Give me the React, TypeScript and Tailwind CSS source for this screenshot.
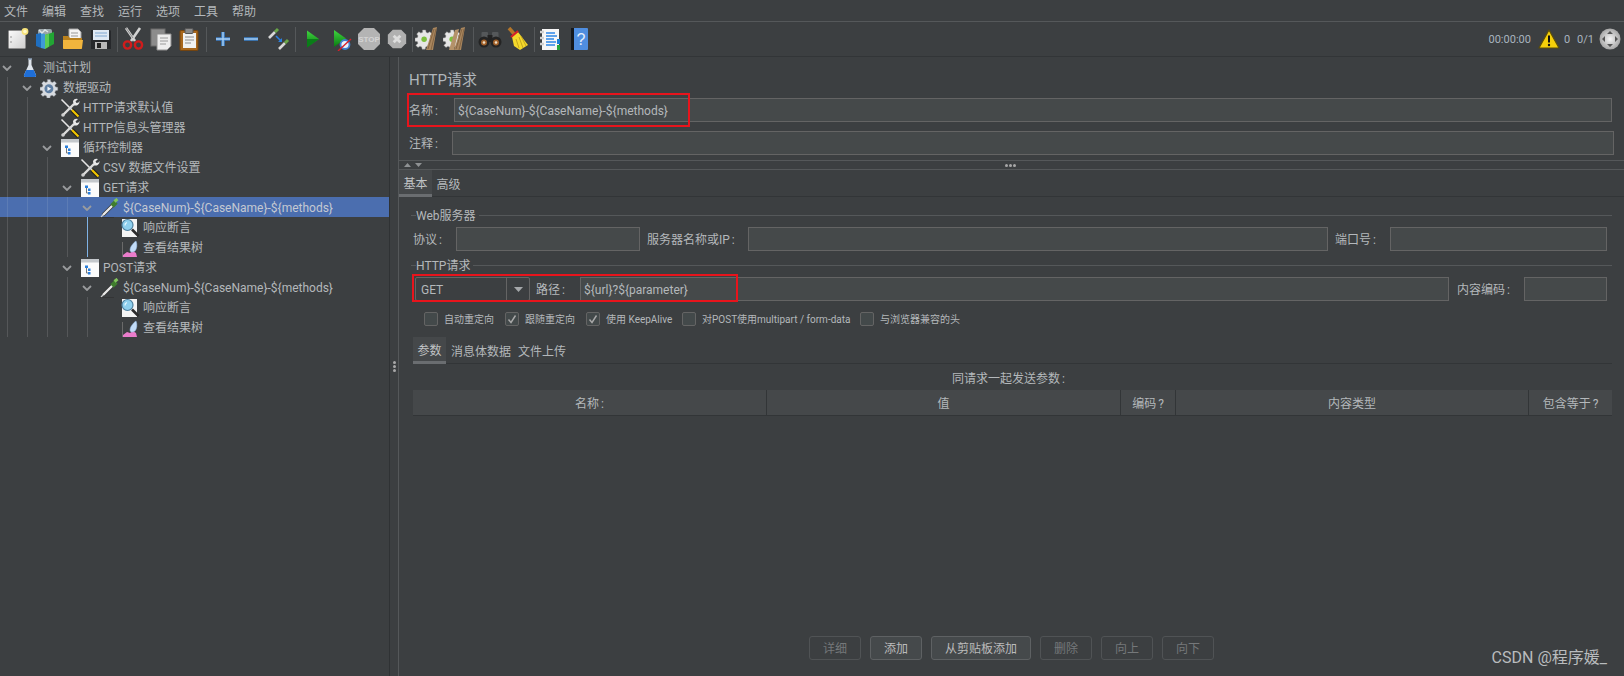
import React from 'react';

const Tool = ({ children, size = 24 }: { children: React.ReactNode; size?: number }) => (
  <svg width={size} height={size} viewBox="0 0 24 24" className="block shrink-0">{children}</svg>
);

const NewIcon = () => (
  <Tool>
    <defs><linearGradient id="pg" x1="0" y1="0" x2="1" y2="1"><stop offset="0" stopColor="#fbfbfb" /><stop offset="1" stopColor="#cfcfcf" /></linearGradient></defs>
    <rect x="3.5" y="3.5" width="17" height="18" rx="1" fill="url(#pg)" stroke="#8d8d8d" />
    <circle cx="6" cy="10" r=".8" fill="#888" /><circle cx="6" cy="15" r=".8" fill="#888" />
    <circle cx="20" cy="4.5" r="3.4" fill="#f6e27a" /><circle cx="20" cy="4.5" r="1.8" fill="#fff8c8" />
  </Tool>
);
const TemplatesIcon = () => (
  <Tool>
    <rect x="5" y="2" width="14" height="7" rx="2" fill="#9aa4a8" />
    <path d="M3 7l5-1v15l-5-2z" fill="#1f6fc0" />
    <path d="M8 6l4 1v15l-4-1z" fill="#3f9ad8" />
    <path d="M12 8l9-3v12l-9 5z" fill="#22a534" />
    <path d="M12 8l4-1.4v13L12 22z" fill="#5ccc55" />
    <path d="M6 3l3 3 3-3 3 2" stroke="#dfe5e8" strokeWidth="1.4" fill="none" />
  </Tool>
);
const OpenIcon = () => (
  <Tool>
    <path d="M8 2h9l3 3v9H8z" fill="#f4f4f4" stroke="#a5a5a5" />
    <path d="M10 6h7M10 9h7" stroke="#999" />
    <path d="M2 9h5l2 2h12v10a1 1 0 0 1-1 1H3a1 1 0 0 1-1-1z" fill="#b9801c" />
    <path d="M2 13h20l-1 8a1 1 0 0 1-1 1H3a1 1 0 0 1-1-1z" fill="#f1b53d" />
  </Tool>
);
const SaveIcon = () => (
  <Tool>
    <path d="M2 3h19l1 1v18H2z" fill="#26282b" />
    <rect x="4" y="3" width="16" height="10" fill="#dfe9f4" />
    <path d="M6 6h12M6 9h12" stroke="#7ea6d0" />
    <rect x="6" y="15" width="12" height="7" fill="#b9b9b9" />
    <rect x="8" y="16" width="4" height="5" fill="#222" />
  </Tool>
);
const CutIcon = () => (
  <Tool>
    <path d="M5 1l9 13M19 1L10 14" stroke="#d2d2d2" strokeWidth="2.6" />
    <path d="M5 1l7 10" stroke="#8a8a8a" strokeWidth="1" />
    <circle cx="6.5" cy="18" r="3.6" fill="none" stroke="#d01c1c" strokeWidth="2.4" />
    <circle cx="17.5" cy="18" r="3.6" fill="none" stroke="#d01c1c" strokeWidth="2.4" />
  </Tool>
);
const CopyIcon = () => (
  <Tool>
    <rect x="2" y="2" width="14" height="17" fill="#8c8c8c" stroke="#6d6d6d" />
    <path d="M8 7h14v12l-4 4H8z" fill="#ededed" stroke="#8f8f8f" />
    <path d="M11 11h8M11 14h8M11 17h6" stroke="#9a9a9a" />
  </Tool>
);
const PasteIcon = () => (
  <Tool>
    <rect x="3" y="3.5" width="18" height="20" rx="1" fill="#a8671c" stroke="#734410" />
    <rect x="6" y="6" width="13" height="15" fill="#f1f1f1" />
    <rect x="8" y="1.5" width="8" height="5" rx="1" fill="#8a8a8a" stroke="#555" />
    <path d="M8 10h9M8 13h9M8 16h6" stroke="#8d8d8d" />
  </Tool>
);
const PlusIcon = () => (
  <Tool>
    <path d="M12 5v14M5 12h14" stroke="#3c7fc7" strokeWidth="3.6" />
    <path d="M12 5v14M5 12h14" stroke="#a9d0f3" strokeWidth="1.4" />
  </Tool>
);
const MinusIcon = () => (
  <Tool>
    <path d="M5 12h14" stroke="#3c7fc7" strokeWidth="3.6" />
    <path d="M5 12h14" stroke="#a9d0f3" strokeWidth="1.4" />
  </Tool>
);
const ToggleIcon = () => (
  <Tool>
    <path d="M2 11l6-6" stroke="#d8d8d8" strokeWidth="2.6" />
    <path d="M8 5l3-3" stroke="#69a648" strokeWidth="3" />
    <path d="M12 22l6-6" stroke="#d8d8d8" strokeWidth="2.6" />
    <path d="M18 16l3-3" stroke="#69a648" strokeWidth="3" />
    <path d="M9 9l5 5" stroke="#2a7fe0" strokeWidth="1.6" />
    <path d="M15 11v4h-4z" fill="#2a7fe0" />
  </Tool>
);
const StartIcon = () => (
  <Tool>
    <defs><linearGradient id="s1" x1="0" y1="0" x2="0" y2="1"><stop offset="0" stopColor="#3fd63f" /><stop offset="1" stopColor="#0a7a12" /></linearGradient></defs>
    <path d="M6 3.500l12 8.500-12 8.500z" fill="url(#s1)" />
    <path d="M6 12h12l-12 8.500z" fill="#0a7d18" />
  </Tool>
);
const StartNoIcon = () => (
  <Tool>
    <defs><linearGradient id="s2" x1="0" y1="0" x2="0" y2="1"><stop offset="0" stopColor="#3fd63f" /><stop offset="1" stopColor="#0a7a12" /></linearGradient></defs>
    <path d="M5 3l12 8.500L5 20z" fill="url(#s2)" />
    <circle cx="16" cy="17.500" r="4.500" fill="#e8f1fb" stroke="#3f7fd0" strokeWidth="1.800" />
    <path d="M9 24l13-12" stroke="#d5202a" strokeWidth="1.400" />
  </Tool>
);
const StopIcon = () => (
  <svg width="24" height="24" viewBox="0 0 24 24" className="block shrink-0">
    <path d="M7 1h10l6 6v10l-6 6H7l-6-6V7z" fill="#b4b4b4" />
    <text x="12" y="15" textAnchor="middle" fontSize="8" fontWeight="700" fontFamily="Liberation Sans" fill="#d4d4d4">STOP</text>
  </svg>
);
const ShutdownIcon = () => (
  <Tool size={20}>
    <path d="M7 1h10l6 6v10l-6 6H7l-6-6V7z" fill="#b0b0b0" />
    <path d="M8 8l8 8M16 8l-8 8" stroke="#dddddd" strokeWidth="3.4" />
  </Tool>
);
const GearPath = "M10 2h4l.6 3 2.3 1 2.6-1.7 2.8 2.8L20 9.7l1 2.3 3 .6v4l-3 .6-1 2.3 1.7 2.6-2.8 2.8-2.6-1.7-2.3 1-.6 3h-4l-.6-3-2.3-1-2.6 1.7-2.8-2.8L4 19.5l-1-2.3-3-.6v-4l3-.6 1-2.3L2.300 7.100l2.800-2.800L7.700 6 10 5z";
const BroomBits = () => (
  <>
    <path d="M18 1l4-1-4 23h-7z" fill="#a9865e" />
    <path d="M13 22l6-20M16 23l5-21" stroke="#7b5d3c" strokeWidth=".8" />
  </>
);
const ClearIcon = () => (
  <Tool>
    <g transform="scale(.76) translate(0 2)"><path d={GearPath} fill="#e6e6e6" stroke="#9a9a9a" strokeWidth=".6" /><circle cx="12" cy="14" r="3.6" fill="#7cbf3e" /></g>
    <BroomBits />
  </Tool>
);
const ClearAllIcon = () => (
  <Tool>
    <g transform="scale(.76) translate(0 2)"><path d={GearPath} fill="#e6e6e6" stroke="#9a9a9a" strokeWidth=".6" /><circle cx="12" cy="14" r="3.6" fill="#7cbf3e" /></g>
    <path d="M12 3l4-1-5 21H6z" fill="#b4926a" />
    <BroomBits />
  </Tool>
);
const BinocIcon = () => (
  <Tool>
    <rect x="3.500" y="5" width="6.500" height="7" rx="1" fill="#55585a" />
    <rect x="14" y="5" width="6.500" height="7" rx="1" fill="#55585a" />
    <rect x="9.500" y="8" width="5" height="7" fill="#222" />
    <circle cx="6" cy="15" r="5.500" fill="#242424" />
    <circle cx="18" cy="15" r="5.500" fill="#242424" />
    <circle cx="6" cy="15.500" r="3" fill="#a2612a" />
    <circle cx="18" cy="15.500" r="3" fill="#a2612a" />
    <circle cx="6" cy="15.500" r="1.300" fill="#f0e0c8" />
    <circle cx="18" cy="15.500" r="1.300" fill="#f0e0c8" />
  </Tool>
);
const BroomIcon = () => (
  <Tool>
    <path d="M3 1l6 7" stroke="#b4762a" strokeWidth="3.600" />
    <path d="M6 10l6-5 10 13-8 5-6-4z" fill="#f4d92b" />
    <path d="M13 21l-3-9M17 21l-4-11M20 19l-5-10" stroke="#b9981a" strokeWidth=".8" />
    <path d="M5 10l7-6" stroke="#d51f28" strokeWidth="2.200" />
  </Tool>
);
const LogIcon = () => (
  <Tool>
    <rect x="4" y="2" width="17" height="21" fill="#f6f6f6" />
    <path d="M8 6h9M8 9h11M8 12h8M8 15h10M8 18h9" stroke="#2d86e8" strokeWidth="1.300" />
    <path d="M2 5h4M2 11h4M2 17h4" stroke="#d0d0d0" strokeWidth="2.400" />
    <rect x="19" y="12" width="3" height="5" fill="#1c7ed6" />
    <rect x="19" y="18" width="3" height="5" fill="#25a33a" />
  </Tool>
);
const HelpIcon = () => (
  <svg width="24" height="24" viewBox="0 0 24 24" className="block shrink-0">
    <rect x="3" y="1" width="17" height="22" rx="1" fill="#4f8ee0" />
    <rect x="3" y="1" width="3" height="22" fill="#15181c" />
    <text x="13" y="18" textAnchor="middle" fontSize="16" fontFamily="Liberation Sans" fill="#e6f0fb">?</text>
  </svg>
);
const WarnIcon = () => (
  <svg width="22" height="21" viewBox="0 0 22 21" className="block shrink-0">
    <path d="M11 1l10 18H1z" fill="#f5cf0a" stroke="#5d4f08" strokeWidth="1.200" strokeLinejoin="round" />
    <path d="M11 6.500v7" stroke="#111" strokeWidth="2" />
    <circle cx="11" cy="16" r="1.200" fill="#111" />
  </svg>
);
const ExpandIcon = () => (
  <svg width="22" height="22" viewBox="0 0 22 22" className="block shrink-0">
    <defs><radialGradient id="ex"><stop offset="0" stopColor="#f5f5f5" /><stop offset="1" stopColor="#a7a7a7" /></radialGradient></defs>
    <circle cx="11" cy="11" r="10.500" fill="url(#ex)" />
    <path d="M11 3l3 3H8zM11 19l3-3H8zM3 11l3-3v6zM19 11l-3-3v6z" fill="#555" />
  </svg>
);

const Flask = () => (
  <svg width="20" height="20" viewBox="0 0 20 20" className="block shrink-0">
    <path d="M8.500 1h3v6l4.500 10a1.500 1.500 0 0 1-1.500 2h-9A1.500 1.500 0 0 1 4 17l4.500-10z" fill="#dfe5ec" />
    <path d="M6.300 12h7.400l2.300 5a1.500 1.500 0 0 1-1.500 2h-9A1.500 1.500 0 0 1 4 17z" fill="#1f6fd8" />
    <path d="M8 1h4" stroke="#8ea2ba" strokeWidth="1.500" />
  </svg>
);
const Gear = () => (
  <svg width="20" height="20" viewBox="0 0 27 27" className="block shrink-0">
    <path d={GearPath} fill="#d7dbe0" stroke="#8b9096" strokeWidth=".6" />
    <circle cx="12" cy="14.500" r="6" fill="#5f7fa3" />
    <path d="M10 11.500l5 3-5 3z" fill="#f0f4f8" />
  </svg>
);
const Wrench = () => (
  <svg width="20" height="20" viewBox="0 0 20 20" className="block shrink-0">
    <path d="M1.500 1.500l11 11" stroke="#e4e4e4" strokeWidth="1.600" />
    <path d="M12 12l6.500 6.500" stroke="#1c1c1c" strokeWidth="4" />
    <path d="M12 12l6.500 6.500" stroke="#f0c400" strokeWidth="2.200" />
    <path d="M3 17L14 6" stroke="#dcdcdc" strokeWidth="2.400" />
    <path d="M13 3a4 4 0 0 1 5-2l-2.500 2.500 1 1.500 2-.5 1-1.500a4 4 0 0 1-6 4z" fill="#e8e8e8" />
    <circle cx="3" cy="17" r="1.800" fill="#cfcfcf" />
  </svg>
);
const Loop = () => (
  <svg width="20" height="20" viewBox="0 0 20 20" className="block shrink-0">
    <rect x="1" y="1" width="18" height="18" fill="#fbfbfb" />
    <rect x="1" y="1" width="18" height="3.500" fill="#c4c8cc" />
    <path d="M6.500 8v7h3" stroke="#777" fill="none" />
    <rect x="5" y="7.500" width="3" height="2.500" fill="#2a7fdc" />
    <rect x="8" y="10.500" width="2.500" height="2.500" fill="#2a7fdc" />
    <rect x="8" y="14" width="2.500" height="2.500" fill="#2a7fdc" />
  </svg>
);
const Pipette = () => (
  <svg width="20" height="20" viewBox="0 0 20 20" className="block shrink-0">
    <path d="M3 17L13 7" stroke="#303030" strokeWidth="3.800" />
    <path d="M3 17L13 7" stroke="#e8e8e8" strokeWidth="2.400" />
    <path d="M1 19l2-2" stroke="#cfcfcf" strokeWidth="1.200" />
    <path d="M12 8l4-4" stroke="#3f7d2e" strokeWidth="4.600" />
    <path d="M14.500 3.500l3-2.500" stroke="#82c45c" strokeWidth="3" />
    <path d="M0 20h14" stroke="#2b2b2b" strokeWidth="1" />
  </svg>
);
const Assert = () => (
  <svg width="20" height="20" viewBox="0 0 20 20" className="block shrink-0">
    <rect x="2" y="1" width="15" height="18" fill="#f4f4f4" />
    <circle cx="7.500" cy="7" r="5.500" fill="#8fd0ee" stroke="#4d7f9e" strokeWidth="1.200" />
    <path d="M7 4.500a3 3 0 0 0-2 3" stroke="#e3f6ff" strokeWidth="1.300" fill="none" />
    <path d="M12 11.500l6.500 6.500" stroke="#2b2b2b" strokeWidth="2.600" />
  </svg>
);
const ResultTree = () => (
  <svg width="20" height="20" viewBox="0 0 20 20" className="block shrink-0">
    <path d="M2.500 4v15" stroke="#6a6a6a" strokeWidth="1" />
    <path d="M3 19v-2l4-3 3 1 3-2 3 2 1 4z" fill="#ea7ccb" />
    <path d="M10 12c0-3 3-7 6-9 1.500 3 1 8-1 10-2 1.500-5 1.500-5-1z" fill="#c2dcf8" stroke="#8fb2dc" strokeWidth=".5" />
  </svg>
);

const Sep = ({ className = '' }: { className?: string }) => <div className={`w-px h-[25px] bg-[#55585a] shrink-0 ${className}`} />;
const Cell = ({ children, className = '' }: { children: React.ReactNode; className?: string }) => (
  <div className={`w-[28px] h-full flex items-center justify-center shrink-0 ${className}`}>{children}</div>
);
const Colon = ({ ch = ':' }: { ch?: string }) => <span className="ml-[2px]">{ch}</span>;

const menu = ['文件', '编辑', '查找', '运行', '选项', '工具', '帮助'];

type Row = { d: number; toggle?: boolean; icon: React.ReactNode; label: string; sel?: boolean; blue?: boolean };
const rows: Row[] = [
  { d: 0, toggle: true, icon: <Flask />, label: '测试计划' },
  { d: 1, toggle: true, icon: <Gear />, label: '数据驱动' },
  { d: 2, icon: <Wrench />, label: 'HTTP请求默认值' },
  { d: 2, icon: <Wrench />, label: 'HTTP信息头管理器' },
  { d: 2, toggle: true, icon: <Loop />, label: '循环控制器' },
  { d: 3, icon: <Wrench />, label: 'CSV 数据文件设置' },
  { d: 3, toggle: true, icon: <Loop />, label: 'GET请求' },
  { d: 4, toggle: true, icon: <Pipette />, label: '${CaseNum}-${CaseName}-${methods}', sel: true },
  { d: 5, icon: <Assert />, label: '响应断言', blue: true },
  { d: 5, icon: <ResultTree />, label: '查看结果树', blue: true },
  { d: 3, toggle: true, icon: <Loop />, label: 'POST请求' },
  { d: 4, toggle: true, icon: <Pipette />, label: '${CaseNum}-${CaseName}-${methods}' },
  { d: 5, icon: <Assert />, label: '响应断言' },
  { d: 5, icon: <ResultTree />, label: '查看结果树' },
];

const TreeRow = ({ row }: { row: Row }) => (
  <div className={`flex h-[20px] items-center ${row.sel ? 'bg-[#4b6eaf] text-[#c4c9d2]' : ''}`}>
    {Array.from({ length: row.d }).map((_, i) => (
      <div key={i} className="w-[20px] h-full pl-[7px] shrink-0">
        <div className={`w-px h-full ${row.blue && i === 4 ? 'bg-[#7fb2e5]' : row.sel ? 'bg-[#5c7cb5]' : 'bg-[#555759]'}`} />
      </div>
    ))}
    <div className="w-[20px] h-full shrink-0 pl-[2px] pt-[2px] flex items-center">
      {row.toggle && (
        <svg width="10" height="6" viewBox="0 0 10 6" className="block">
          <path d="M1 1l4 4 4-4" stroke="#9a9c9e" strokeWidth="1.800" fill="none" />
        </svg>
      )}
    </div>
    <div className="w-[23px] shrink-0 h-full pt-px">{row.icon}</div>
    <span className="whitespace-nowrap pt-[2px]">{row.label}</span>
  </div>
);

const Input = ({ className = '', value = '' }: { className?: string; value?: string }) => (
  <div className={`h-[24px] border border-[#646464] bg-[#45494a] px-[3px] pt-[2px] flex items-center whitespace-nowrap overflow-hidden ${className}`}>{value}</div>
);

const Section = ({ title }: { title: string }) => (
  <div className="flex items-center h-[12px] ml-[12px] mr-[12px]">
    <div className="w-[5px] h-px bg-[#55585a] -translate-y-px" />
    <span className="whitespace-nowrap leading-[12px]">{title}</span>
    <div className="flex-1 h-px bg-[#55585a] ml-[3px] -translate-y-px" />
  </div>
);

const Check = ({ checked }: { checked?: boolean }) => (
  <div className="w-[14px] h-[14px] rounded-[2px] border border-[#646464] bg-[#43494a] flex items-center justify-center shrink-0">
    {checked && (
      <svg width="10" height="10" viewBox="0 0 10 10"><path d="M1.500 5.500L4 8.500l4.500-7" stroke="#a9a9a9" strokeWidth="1.400" fill="none" /></svg>
    )}
  </div>
);

const checks: { label: string; on?: boolean; w: string }[] = [
  { label: '自动重定向', w: 'w-[81px]' },
  { label: '跟随重定向', on: true, w: 'w-[81px]' },
  { label: '使用 KeepAlive', on: true, w: 'w-[96px]' },
  { label: '对POST使用multipart / form-data', w: 'w-[178px]' },
  { label: '与浏览器兼容的头', w: 'w-[120px]' },
];

const cols: { label: string; ch?: string; w: string }[] = [
  { label: '名称', ch: ':', w: 'w-[354px]' },
  { label: '值', w: 'w-[354px]' },
  { label: '编码', ch: '?', w: 'w-[55px]' },
  { label: '内容类型', w: 'w-[353px]' },
  { label: '包含等于', ch: '?', w: 'flex-1' },
];

const buttons: { label: string; on?: boolean; w: string }[] = [
  { label: '详细', w: 'w-[52px]' },
  { label: '添加', on: true, w: 'w-[52px]' },
  { label: '从剪贴板添加', on: true, w: 'w-[100px]' },
  { label: '删除', w: 'w-[52px]' },
  { label: '向上', w: 'w-[52px]' },
  { label: '向下', w: 'w-[52px]' },
];

const Tab = ({ label }: { label: string }) => (
  <div className="w-[33px] h-[27px] pt-[3px] bg-[#45484a] border-b-[3px] border-[#6a6d70] flex items-center justify-center text-[#c0c3c5]">{label}</div>
);

export default function App() {
  return (
    <div className="relative w-[1624px] h-[676px] overflow-hidden bg-[#3c3f41] text-[#b4b8bb] text-[12px] leading-none flex flex-col font-['Roboto','Noto_Sans_CJK_SC',sans-serif]">
      {/* menu */}
      <div className="h-[22px] shrink-0 border-b border-[#55585a] flex items-center pl-[4px] pt-[2px] gap-[15px]">
        {menu.map((m) => <span key={m} className="w-[23px] whitespace-nowrap">{m}</span>)}
      </div>

      {/* toolbar */}
      <div className="h-[35px] shrink-0 border-b border-[#323537] flex items-center pl-[3px]">
        <Cell><NewIcon /></Cell>
        <Cell><TemplatesIcon /></Cell>
        <Cell><OpenIcon /></Cell>
        <Cell><SaveIcon /></Cell>
        <Sep className="ml-[2px] mr-px" />
        <Cell><CutIcon /></Cell>
        <Cell><CopyIcon /></Cell>
        <Cell><PasteIcon /></Cell>
        <Sep className="ml-[3px] mr-[2px]" />
        <Cell><PlusIcon /></Cell>
        <Cell><MinusIcon /></Cell>
        <Cell><ToggleIcon /></Cell>
        <Sep className="ml-[2px] mr-[3px]" />
        <Cell><StartIcon /></Cell>
        <Cell><StartNoIcon /></Cell>
        <Cell><StopIcon /></Cell>
        <Cell><ShutdownIcon /></Cell>
        <Sep className="ml-px" />
        <Cell><ClearIcon /></Cell>
        <Cell><ClearAllIcon /></Cell>
        <Sep className="ml-[4px] mr-[2px]" />
        <Cell><BinocIcon /></Cell>
        <Cell><BroomIcon /></Cell>
        <Sep className="ml-[2px] mr-px" />
        <Cell><LogIcon /></Cell>
        <Cell className="ml-[2px]"><HelpIcon /></Cell>
        <div className="ml-auto flex items-center pr-[3px] text-[#a9b4bf] text-[11px]">
          <span className="mr-[7px]">00:00:00</span>
          <WarnIcon />
          <span className="ml-[4px] mr-[7px]">0</span>
          <span className="mr-[5px]">0/1</span>
          <ExpandIcon />
        </div>
      </div>

      <div className="flex-1 flex min-h-0">
        {/* tree */}
        <div className="w-[390px] shrink-0 border-r border-[#2f3234]">
          {rows.map((r, i) => <TreeRow key={i} row={r} />)}
        </div>
        {/* vertical splitter */}
        <div className="w-[9px] shrink-0 border-r border-[#55585a] flex flex-col items-center justify-center gap-[1px]">
          {[0, 1, 2].map((i) => <div key={i} className="w-[3px] h-[3px] rounded-full bg-[#a8a8a8]" />)}
        </div>

        {/* right */}
        <div className="flex-1 min-w-0 flex flex-col">
          <div className="h-[41px] pl-[10px] pt-[5px] flex items-center text-[15px] text-[#b0b6bb]">HTTP请求</div>
          <div className="flex items-center pl-[10px] pr-[12px]">
            <span className="w-[45px] shrink-0 pt-[2px]">名称<Colon /></span>
            <Input className="flex-1" value="${CaseNum}-${CaseName}-${methods}" />
          </div>
          <div className="flex items-center pl-[10px] pr-[10px] mt-[9px]">
            <span className="w-[43px] shrink-0 pt-[2px]">注释<Colon /></span>
            <Input className="flex-1" />
          </div>

          {/* horizontal splitter */}
          <div className="mt-[5px] h-[10px] border-y border-[#55585a] flex items-center relative shrink-0">
            <div className="flex items-center gap-[4px] pl-[5px]">
              <svg width="7" height="4" viewBox="0 0 7 4"><path d="M3.500 0L7 4H0z" fill="#8f9294" /></svg>
              <svg width="7" height="4" viewBox="0 0 7 4"><path d="M3.500 4L7 0H0z" fill="#8f9294" /></svg>
            </div>
            <div className="absolute left-[606px] flex gap-[1px]">
              {[0, 1, 2].map((i) => <div key={i} className="w-[3px] h-[3px] rounded-full bg-[#a8a8a8]" />)}
            </div>
          </div>

          {/* tabs */}
          <div className="h-[27px] shrink-0 border-b border-[#323537] flex">
            <Tab label="基本" />
            <div className="w-[33px] flex items-center justify-center pt-[3px]">高级</div>
          </div>

          <div className="pt-[13px]">
            <Section title="Web服务器" />
            <div className="flex items-center mt-[5px] pl-[14px] pr-[17px]">
              <span className="w-[43px] shrink-0 pt-[2px]">协议<Colon /></span>
              <Input className="w-[184px] shrink-0" />
              <span className="w-[108px] pl-[7px] pt-[2px] shrink-0 whitespace-nowrap">服务器名称或IP<Colon /></span>
              <Input className="flex-1" />
              <span className="w-[62px] pl-[7px] pt-[2px] shrink-0 whitespace-nowrap">端口号<Colon /></span>
              <Input className="w-[217px] shrink-0" />
            </div>

            <div className="mt-[9px]"><Section title="HTTP请求" /></div>
            <div className="flex items-center mt-[5px] pl-[16px] pr-[17px]">
              <div className="w-[115px] h-[24px] shrink-0 border border-[#646464] rounded-[2px] flex items-center">
                <span className="flex-1 pl-[5px] pt-[2px]">GET</span>
                <div className="w-[23px] h-full border-l border-[#646464] flex items-center justify-center">
                  <svg width="9" height="5" viewBox="0 0 9 5"><path d="M0 0h9L4.500 5z" fill="#a5a8aa" /></svg>
                </div>
              </div>
              <span className="w-[50px] pl-[6px] pt-[2px] shrink-0">路径<Colon /></span>
              <Input className="flex-1" value="${url}?${parameter}" />
              <span className="w-[75px] pl-[8px] pt-[2px] shrink-0 whitespace-nowrap">内容编码<Colon /></span>
              <Input className="w-[83px] shrink-0" />
            </div>

            <div className="flex items-center mt-[11px] pl-[25px] text-[10px] h-[14px]">
              {checks.map((c) => (
                <div key={c.label} className={`${c.w} shrink-0 flex items-center gap-[6px] whitespace-nowrap`}>
                  <Check checked={c.on} />
                  <span className="pt-[2px]">{c.label}</span>
                </div>
              ))}
            </div>

            <div className="mt-[11px] ml-[14px] mr-[12px] h-[27px] border-b border-[#323537] flex">
              <Tab label="参数" />
              <div className="w-[70px] flex items-center justify-center pt-[3px]">消息体数据</div>
              <div className="w-[50px] flex items-center justify-center ml-[1px] pt-[3px]">文件上传</div>
            </div>

            <div className="h-[26px] flex items-center justify-center ml-[14px] mr-[12px] pr-[8px] pt-[3px]">同请求一起发送参数<Colon /></div>

            <div className="ml-[14px] mr-[12px] h-[26px] bg-[#45484a] border-b border-[#323537] flex">
              {cols.map((c, i) => (
                <div key={c.label} className={`${c.w} ${i < 4 ? 'shrink-0 border-r border-[#323537]' : ''} pt-[3px] flex items-center justify-center`}>
                  <span>{c.label}{c.ch && <Colon ch={c.ch} />}</span>
                </div>
              ))}
            </div>
          </div>

          <div className="mt-auto pb-[16px] pl-[410px] flex gap-[9px]">
            {buttons.map((b) => (
              <div key={b.label} className={`${b.w} h-[24px] pt-[2px] shrink-0 rounded-[3px] border flex items-center justify-center ${b.on ? 'border-[#5e6163] bg-[#45494b] text-[#bbbbbb]' : 'border-[#505355] text-[#75787a]'}`}>{b.label}</div>
            ))}
          </div>
        </div>
      </div>

      {/* annotations over the screenshot */}
      <div className="absolute left-[407px] top-[93px] w-[283px] h-[34px] border-[2px] border-[#e8141c]" />
      <div className="absolute left-[412px] top-[274px] w-[326px] h-[28px] border-[2px] border-[#e8141c]" />
      <div className="absolute right-[17px] top-[650px] text-[16px] text-[#b9bcbe] whitespace-nowrap">CSDN @程序媛_</div>
    </div>
  );
}
